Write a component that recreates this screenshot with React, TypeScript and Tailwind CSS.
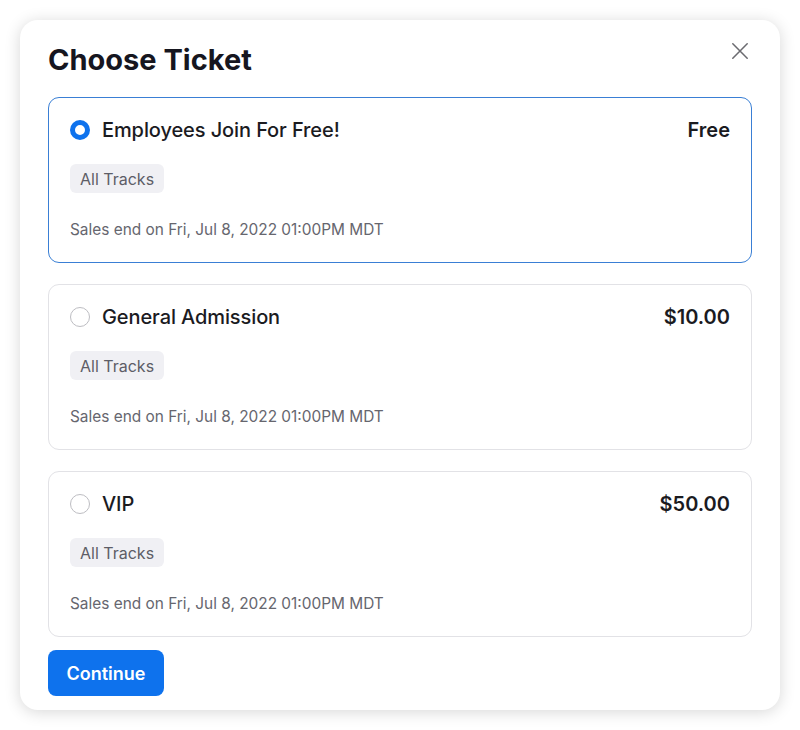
import React from "react";

type Ticket = { name: string; price: string; selected?: boolean };

const tickets: Ticket[] = [
  { name: "Employees Join For Free!", price: "Free", selected: true },
  { name: "General Admission", price: "$10.00" },
  { name: "VIP", price: "$50.00" },
];

function TicketCard({ t }: { t: Ticket }) {
  return (
    <div
      className={
        "rounded-[11px] bg-white pl-[21px] pr-[21px] pt-[19px] pb-[23px] " +
        (t.selected
          ? "border-[1.5px] border-[#3a7fd5]"
          : "border border-[#e2e2e6]")
      }
    >
      <div className="flex items-center justify-between h-[26px]">
        <div className="flex items-center gap-[12px]">
          {t.selected ? (
            <span className="w-[20px] h-[20px] rounded-full border-[5px] border-[#0e72ed] bg-white" />
          ) : (
            <span className="w-[20px] h-[20px] rounded-full border-[1.5px] border-[#bdbdc2] bg-white" />
          )}
          <span className="text-[20px] font-medium text-[#1b1b1f] tracking-[-0.1px]">
            {t.name}
          </span>
        </div>
        <span className="text-[20px] font-semibold text-[#1b1b1f]">{t.price}</span>
      </div>
      <div className="mt-[21px] h-[29px]">
        <span className="inline-flex items-center h-[29px] px-[10px] rounded-[6px] bg-[#f0f0f4] text-[16px] text-[#5d5d66]">
          All Tracks
        </span>
      </div>
      <div className="mt-[28px] text-[15.4px] text-[#66666e] leading-[18px]">
        Sales end on Fri, Jul 8, 2022 01:00PM MDT
      </div>
    </div>
  );
}

export default function App() {
  return (
    <div
      className="w-[800px] h-[730px] bg-white p-[20px]"
      style={{ fontFamily: "Inter, 'Noto Sans', sans-serif" }}
    >
      <div className="w-[760px] h-[690px] bg-white rounded-[18px] shadow-[0_2px_16px_rgba(0,0,0,0.16)] pl-[28px] pr-[28px] pt-[20px]">
        <div className="flex items-start justify-between h-[57px]">
          <h1 className="text-[29px] font-bold text-[#16161f] leading-[36px] pt-[2px]">
            Choose Ticket
          </h1>
          <button className="mt-[-7px] mr-[-6px] w-[36px] h-[36px] flex items-center justify-center text-[#6b6b70]">
            <svg width="18" height="18" viewBox="0 0 20 20" fill="none" stroke="currentColor" strokeWidth="1.7" strokeLinecap="round">
              <path d="M2 2 L18 18 M18 2 L2 18" />
            </svg>
          </button>
        </div>
        <div className="flex flex-col gap-[21px]">
          {tickets.map((t) => (
            <TicketCard key={t.name} t={t} />
          ))}
        </div>
        <button className="mt-[13px] h-[46px] w-[116px] rounded-[8px] bg-[#0e72ed] text-white text-[18px] font-semibold">
          Continue
        </button>
      </div>
    </div>
  );
}
